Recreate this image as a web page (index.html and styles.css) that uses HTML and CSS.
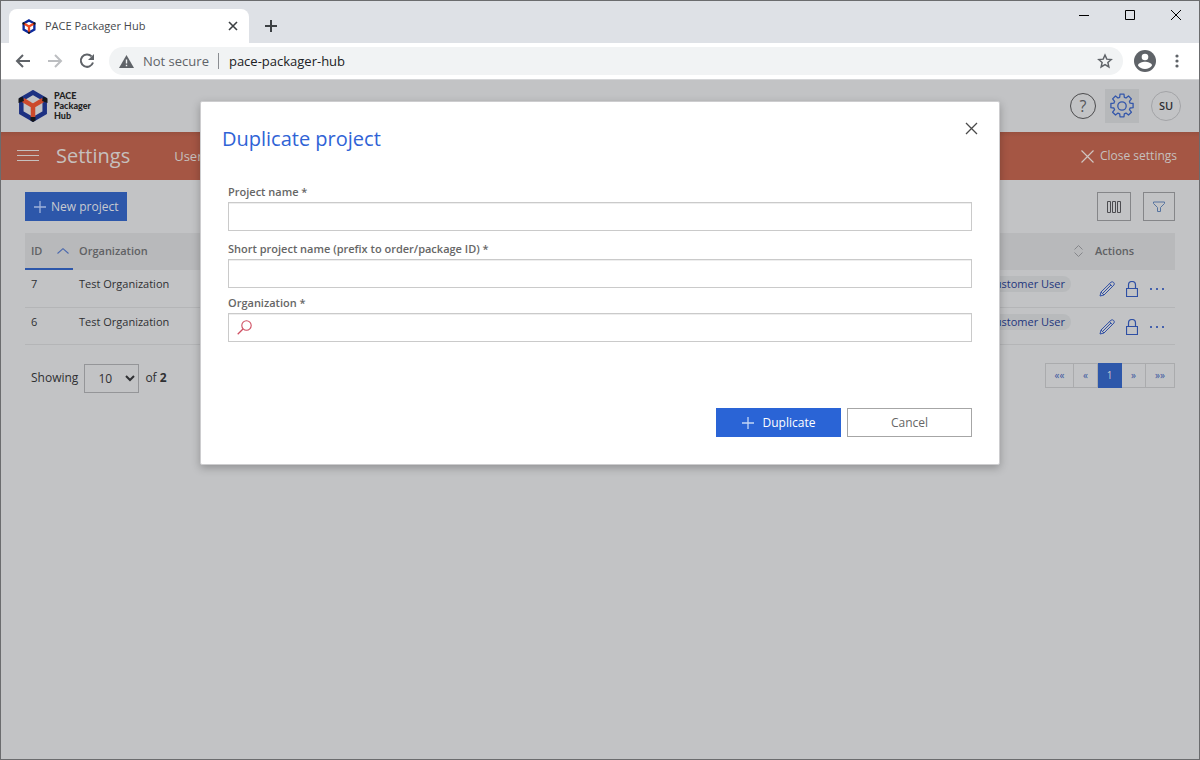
FILE: index.html
```html
<!DOCTYPE html>
<html lang="en">
<head>
<meta charset="utf-8">
<title>PACE Packager Hub</title>
<link rel="stylesheet" href="styles.css">
</head>
<body>
<div class="window">
  <header class="tabstrip">
    <div class="tab">
      <svg class="favicon" width="14" height="15" viewBox="0 0 30 32"><g fill="none" stroke-width="5"><path stroke="#0c2a9c" d="M15 3 26.500 9.500v13L15 29 3.500 22.500v-13z"/><path stroke="#f04a24" d="M4 9.500 15 16l11-6.500M15 16v12"/></g><g fill="#111"><circle cx="3.500" cy="9.500" r="2.500"/><circle cx="26.500" cy="9.500" r="2.500"/><circle cx="15" cy="29" r="2.500"/></g></svg>
      <span class="tab-title">PACE Packager Hub</span>
      <button class="plain" aria-label="Close tab"><svg width="10" height="10" viewBox="0 0 10 10"><path d="m1 1 8 8M9 1 1 9" stroke="#3c4043" stroke-width="1.600"/></svg></button>
    </div>
    <button class="plain new-tab" aria-label="New tab"><svg width="12" height="12" viewBox="0 0 12 12"><path d="M6 0v12M0 6h12" stroke="#3c4043" stroke-width="2"/></svg></button>
    <div class="window-controls">
      <button class="plain" aria-label="Minimize"><svg width="12" height="12" viewBox="0 0 12 12"><path d="M1 6.500h10" stroke="#000"/></svg></button>
      <button class="plain" aria-label="Maximize"><svg width="12" height="12" viewBox="0 0 12 12"><path d="M1.500 1.500h9v9h-9z" fill="none" stroke="#000"/></svg></button>
      <button class="plain" aria-label="Close window"><svg width="12" height="12" viewBox="0 0 12 12"><path d="m1 1 10 10M11 1 1 11" stroke="#000"/></svg></button>
    </div>
  </header>

  <div class="toolbar">
    <button class="plain" aria-label="Back"><svg width="16" height="16" viewBox="0 0 16 16"><path d="M15 8H2M8 2 2 8l6 6" fill="none" stroke="#5f6368" stroke-width="2"/></svg></button>
    <button class="plain" aria-label="Forward"><svg width="16" height="16" viewBox="0 0 16 16"><path d="M1 8h13M8 2l6 6-6 6" fill="none" stroke="#bcbec1" stroke-width="2"/></svg></button>
    <button class="plain" aria-label="Reload"><svg width="16" height="16" viewBox="0 0 16 16"><path d="M12.600 3.400A6.200 6.200 0 1 0 14 9.500" fill="none" stroke="#5f6368" stroke-width="2"/><path d="M15 1v6H9z" fill="#5f6368"/></svg></button>
    <div class="omnibox">
      <svg width="15" height="13" viewBox="0 0 15 13"><path fill="#5f6368" d="M7.500 0 15 13H0z"/><path d="M7.500 4.500v4M7.500 9.800v1.500" stroke="#f1f3f4" stroke-width="1.400"/></svg>
      <span class="insecure">Not secure</span>
      <input class="url" type="text" aria-label="Address" value="pace-packager-hub">
      <button class="plain" aria-label="Bookmark"><svg width="16" height="16" viewBox="0 0 24 24"><path fill="none" stroke="#5f6368" stroke-width="2.200" d="m12 3 2.700 6.200 6.600.6-5 4.500 1.500 6.600-5.800-3.500-5.800 3.500 1.500-6.600-5-4.500 6.600-.6z"/></svg></button>
    </div>
    <button class="plain profile" aria-label="Profile"><svg width="22" height="22" viewBox="0 0 22 22"><circle cx="11" cy="11" r="11" fill="#5f6368"/><circle cx="11" cy="7" r="3.300" fill="#fff"/><path fill="#fff" d="M4 15.500c0-2.700 4.500-3.800 7-3.800s7 1.100 7 3.800c-1.500 2.200-4 3.500-7 3.500s-5.500-1.300-7-3.500z"/></svg></button>
    <button class="plain menu-dots" aria-label="Menu"><svg width="4" height="14" viewBox="0 0 4 14"><g fill="#5f6368"><circle cx="2" cy="2" r="1.600"/><circle cx="2" cy="7" r="1.600"/><circle cx="2" cy="12" r="1.600"/></g></svg></button>
  </div>

  <main class="app">
    <header class="app-header">
      <svg width="30" height="32" viewBox="0 0 30 32"><g fill="none" stroke-width="4.500"><path stroke="#1d3182" d="M15 2.500 26.700 9.300v13.400L15 29.500 3.300 22.700V9.300z"/><path stroke="#cc4a2c" d="M5 10 15 16l10-6M15 16v11.500"/></g><g fill="#15161a"><path d="m0.500 8.500 4-2 1.500 4.500-5.500 2zM29.500 8.500l-4-2-1.500 4.500 5.500 2zM12.500 27h5v3.500L15 32l-2.500-1.500z"/></g></svg>
      <div class="brand"><span>PACE</span><span>Packager</span><span>Hub</span></div>
      <div class="header-actions">
        <button class="round help" aria-label="Help">?</button>
        <button class="gear" aria-label="Settings"><svg width="26" height="26" viewBox="0 0 26 26"><g fill="none" stroke="#3457ab" stroke-width="1.300" stroke-linejoin="round"><path d="M10.700 4.300 11 1.200h4l.3 3.100 1.700.7 2.500-2 2.900 2.900-2 2.400.7 1.900 3 .3v4.200l-3 .3-.7 1.700 2 2.500-2.900 2.800-2.500-1.900-1.700.7-.3 3h-4l-.3-3-1.700-.7-2.500 1.900-2.900-2.800 2-2.500-.7-1.700-3-.3v-4.200l3-.3.7-1.900-2-2.400L6.500 3 9 5z"/><circle cx="13" cy="13" r="4.200"/></g></svg></button>
        <button class="round avatar">SU</button>
      </div>
    </header>

    <nav class="settings-bar">
      <button class="plain" aria-label="Open navigation"><svg width="22" height="12" viewBox="0 0 22 12"><path d="M0 .5h22M0 5.500h22M0 10.500h22" stroke="#c6c0be"/></svg></button>
      <h1 class="settings-title">Settings</h1>
      <a class="nav-link" href="#">Users</a>
      <a class="close-settings" href="#"><svg width="13" height="13" viewBox="0 0 13 13"><path d="m.5.5 12 12M12.500.5l-12 12" stroke="#d0c4c0" stroke-width="1.200"/></svg>Close settings</a>
    </nav>

    <section class="content">
      <div class="actions-bar">
        <button class="btn new-project"><svg width="12" height="12" viewBox="0 0 12 12"><path d="M6 0v12M0 6h12" stroke="#9fb2da" stroke-width="1.300"/></svg>New project</button>
        <button class="icon-btn columns" aria-label="Columns"><svg width="14" height="12" viewBox="0 0 14 12"><path fill="none" stroke="#4c4c50" d="M.5.5h3v11h-3zM5.500.5h3v11h-3zM10.500.5h3v11h-3z"/></svg></button>
        <button class="icon-btn filter" aria-label="Filter"><svg width="12" height="12" viewBox="0 0 12 12"><path fill="none" stroke="#56739f" d="M.5 1h11v1.500L7.500 6.500v4h-3v-4L.5 2.500z"/></svg></button>
      </div>

      <table class="grid">
        <thead>
          <tr>
            <th class="col-id sorted"><div class="th-row">ID<svg width="12" height="6" viewBox="0 0 12 6"><path d="M.5 5.500 6 .7l5.500 4.800" fill="none" stroke="#4a68ae" stroke-width="1.100"/></svg></div></th>
            <th>Organization</th>
            <th class="col-users"><svg width="9" height="12" viewBox="0 0 9 12"><path d="M.5 4.500l4-4 4 4M.5 7.500l4 4 4-4" fill="none" stroke="#85868a"/></svg></th>
            <th class="col-actions">Actions</th>
          </tr>
        </thead>
        <tbody>
          <tr>
            <td>7</td><td>Test Organization</td>
            <td class="col-users"><span class="pill">Customer User</span></td>
            <td class="col-actions"><div class="row-actions">
              <button class="plain" aria-label="Edit"><svg width="16" height="16" viewBox="0 0 16 16"><path d="M1 15l1-4L12 1.200q1.300-1 2.700.3 1.200 1.300.2 2.600L5 14zM2 11l3 3M10.500 2.700l3 3M4 12l8-8" fill="none" stroke="#3150a5"/></svg></button>
              <button class="plain" aria-label="Lock"><svg width="12" height="16" viewBox="0 0 12 16"><path d="M.5 7.500h11v8H.5zM2.500 7.500V4a3.500 3.500 0 0 1 7 0v3.500" fill="none" stroke="#2e4fa4" stroke-width="1.200"/></svg></button>
              <button class="plain" aria-label="More"><svg width="16" height="2" viewBox="0 0 16 2"><path d="M1 0h2v2H1zM7 0h2v2H7zM13 0h2v2h-2z" fill="#4561ac"/></svg></button>
            </div></td>
          </tr>
          <tr>
            <td>6</td><td>Test Organization</td>
            <td class="col-users"><span class="pill">Customer User</span></td>
            <td class="col-actions"><div class="row-actions">
              <button class="plain" aria-label="Edit"><svg width="16" height="16" viewBox="0 0 16 16"><path d="M1 15l1-4L12 1.200q1.300-1 2.700.3 1.200 1.300.2 2.600L5 14zM2 11l3 3M10.500 2.700l3 3M4 12l8-8" fill="none" stroke="#3150a5"/></svg></button>
              <button class="plain" aria-label="Lock"><svg width="12" height="16" viewBox="0 0 12 16"><path d="M.5 7.500h11v8H.5zM2.500 7.500V4a3.500 3.500 0 0 1 7 0v3.500" fill="none" stroke="#2e4fa4" stroke-width="1.200"/></svg></button>
              <button class="plain" aria-label="More"><svg width="16" height="2" viewBox="0 0 16 2"><path d="M1 0h2v2H1zM7 0h2v2H7zM13 0h2v2h-2z" fill="#4561ac"/></svg></button>
            </div></td>
          </tr>
        </tbody>
      </table>

      <footer class="grid-footer">
        <div class="page-size">
          <label for="page-size">Showing</label>
          <select id="page-size"><option>10</option><option>25</option></select>
          <span>of <b>2</b></span>
        </div>
        <div class="pager">
          <a class="wide" href="#">««</a><a href="#">«</a><a class="current" href="#">1</a><a href="#">»</a><a class="wide" href="#">»»</a>
        </div>
      </footer>
    </section>

    <div class="overlay">
      <form class="dialog" role="dialog" aria-labelledby="dialog-title">
        <div class="dialog-head">
          <h2 class="dialog-title" id="dialog-title">Duplicate project</h2>
          <button type="button" class="plain" aria-label="Close dialog"><svg width="13" height="13" viewBox="0 0 13 13"><path d="m1 1 11 11M12 1 1 12" stroke="#4a4a4a" stroke-width="1.300"/></svg></button>
        </div>
        <div class="field spaced">
          <label for="project-name">Project name *</label>
          <input id="project-name" type="text">
        </div>
        <div class="field">
          <label for="short-name">Short project name (prefix to order/package ID) *</label>
          <input id="short-name" type="text">
        </div>
        <div class="field">
          <label for="organization">Organization *</label>
          <div class="search">
            <svg width="15" height="15" viewBox="0 0 15 15"><circle cx="9.500" cy="5.500" r="4.700" fill="none" stroke="#cf4f62" stroke-width="1.100"/><path d="M6 9 .7 14.200" stroke="#cf4f62" stroke-width="1.300"/></svg>
            <input id="organization" type="text">
          </div>
        </div>
        <div class="dialog-actions">
          <button type="button" class="btn primary"><svg width="12" height="12" viewBox="0 0 12 12"><path d="M6 0v12M0 6h12" stroke="#c4d6f6" stroke-width="1.300"/></svg>Duplicate</button>
          <button type="button" class="btn secondary">Cancel</button>
        </div>
      </form>
    </div>
  </main>
</div>
</body>
</html>
```
FILE: styles.css
```css
* { box-sizing: border-box; }
body { margin: 0; font-family: "Open Sans", "Noto Sans", sans-serif; font-size: 11px; line-height: 16px; color: #2f3033; }
button, input, select { font: inherit; color: inherit; }
a { color: inherit; text-decoration: none; }
svg { display: block; flex: none; }
.plain { display: flex; align-items: center; justify-content: center; padding: 0; border: 0; background: none; }

.window { display: flex; flex-direction: column; min-height: 100vh; border: 1px solid #6b6c6e; background: #c2c3c5; }

.tabstrip { display: flex; align-items: flex-end; height: 42px; padding-left: 8px; background: #dee1e6; }
.tab { display: flex; align-items: center; gap: 9px; width: 240px; height: 34px; padding: 0 11px 0 13px; border-radius: 8px 8px 0 0; background: #fff; color: #45484c; }
.tab-title { flex: 1; }
.new-tab { width: 44px; height: 34px; }
.window-controls { display: flex; align-self: flex-start; margin-left: auto; height: 28px; }
.window-controls .plain { width: 46px; }

.toolbar { display: flex; align-items: center; gap: 16px; height: 37px; padding: 0 20px 0 14px; border-bottom: 1px solid #d5d6d8; background: #fff; }
.omnibox { display: flex; align-items: center; flex: 1; height: 28px; margin-left: -2px; padding: 0 10px; border-radius: 14px; background: #f1f3f4; font-size: 13px; }
.insecure { margin-left: 9px; padding-right: 9px; border-right: 1px solid #8a8d91; color: #5f6368; }
.url { flex: 1; min-width: 0; border: 0; padding: 0 10px; background: none; color: #202124; }
.profile { margin-left: -5px; }
.menu-dots { margin-left: 3px; }

.app { position: relative; flex: 1; }
.app-header { display: flex; align-items: center; gap: 6px; height: 52px; padding: 0 18px 0 17px; background: #c2c3c5; }
.brand { display: flex; flex-direction: column; color: #222; font-family: "Lato", sans-serif; font-size: 9px; font-weight: 900; line-height: 10px; }
.header-actions { display: flex; align-items: center; margin-left: auto; }
.round { display: flex; align-items: center; justify-content: center; padding: 0; border-radius: 50%; background: none; }
.help { width: 26px; height: 26px; border: 1px solid #4b4b4d; color: #55565a; font-size: 16px; }
.gear { display: flex; align-items: center; justify-content: center; width: 34px; height: 34px; margin: 0 12px 0 9px; padding: 0; border: 0; background: #b6b8ba; }
.avatar { width: 30px; height: 30px; border: 1px solid #a3a4a7; font-weight: 600; }

.settings-bar { display: flex; align-items: center; height: 48px; padding: 0 22px 0 16px; background: linear-gradient(#98503f, #a55644 5px); color: #c6c0be; }
.settings-title { margin: 0 44px 0 17px; font-size: 20px; font-weight: 400; line-height: 28px; }
.nav-link { font-size: 13px; }
.close-settings { display: flex; align-items: center; gap: 6px; margin-left: auto; font-size: 12px; }

.content { padding: 12px 24px; }
.actions-bar { display: flex; gap: 12px; }
.btn { display: flex; align-items: center; justify-content: center; height: 29px; padding: 0; border: 0; font-size: 12px; }
.new-project { gap: 5px; padding: 0 9px; margin-right: auto; background: #2d57aa; color: #c8cad0; }
.icon-btn { display: flex; align-items: center; justify-content: center; width: 34px; height: 29px; padding: 0; border: 1px solid #858689; background: none; }
.filter { width: 32px; }

.grid { width: 100%; margin-top: 12px; border-collapse: collapse; table-layout: fixed; }
th { height: 37px; padding: 0 6px 2px; background: #b8b9bb; color: #606164; font-weight: 600; text-align: left; }
.col-id { width: 48px; }
.sorted { box-shadow: inset 0 -2px #2d57aa; }
.th-row { display: flex; align-items: center; justify-content: space-between; margin-right: -2px; }
td { height: 37px; padding: 6px 6px 4px; border-bottom: 1px solid #b4b5b7; vertical-align: top; }
.grid .col-users { width: 144px; padding-right: 24px; text-align: right; white-space: nowrap; }
.grid th.col-users { padding-right: 12px; }
th.col-users svg { margin-left: auto; }
.grid .col-actions { width: 80px; padding-left: 0; }
.pill { display: inline-block; padding: 0 6px; border-radius: 8px; background: #b8babc; color: #22357d; }
.row-actions { display: flex; align-items: center; gap: 11px; height: 26px; padding-left: 4px; }

.grid-footer { display: flex; justify-content: space-between; align-items: flex-start; padding-top: 18px; }
.page-size { display: flex; align-items: center; gap: 6px; padding: 1px 0 0 6px; font-size: 12px; }
.page-size select { width: 55px; height: 29px; padding: 0 0 0 9px; border: 1px solid #949598; border-radius: 0; background: transparent; }
.pager { display: flex; color: #3a559f; font-size: 10px; }
.pager a { width: 24px; height: 25px; border: 1px solid #aaabad; border-left-width: 0; line-height: 23px; text-align: center; }
.pager .wide { width: 29px; }
.pager a:first-child { border-left-width: 1px; }
.pager .current { border-color: #2d57aa; background: #2d57aa; color: #c8cad0; }

.overlay { position: absolute; inset: 0; display: flex; align-items: flex-start; justify-content: center; padding: 21px 16px; }
.dialog { width: 100%; max-width: 800px; padding: 20px 27px 27px; border: 1px solid #cdcdcf; border-radius: 2px; background: #fff; box-shadow: 0 3px 8px rgba(0, 0, 0, .25); color: #666; }
.dialog-head { display: flex; justify-content: space-between; align-items: flex-start; margin: 0 -6px 31px; }
.dialog-title { margin: 3px 0 0; color: #2f63d6; font-size: 20px; font-weight: 400; line-height: 28px; }
.field { display: flex; flex-direction: column; gap: 2px; margin-bottom: 7px; }
.spaced { margin-bottom: 10px; }
.field label { font-weight: 600; }
.field > input, .search { width: 100%; height: 29px; border: 1px solid #cacaca; background: #fff; box-shadow: inset 0 1px #eee; }
.search { display: flex; align-items: center; gap: 8px; padding-left: 8px; }
.search input { flex: 1; border: 0; background: none; }
.dialog-actions { display: flex; justify-content: flex-end; gap: 6px; margin-top: 66px; }
.dialog-actions .btn { width: 125px; }
.primary { gap: 9px; background: #2a64d6; color: #fff; }
.secondary { border: 1px solid #a6a6a6; background: #fff; }
```
